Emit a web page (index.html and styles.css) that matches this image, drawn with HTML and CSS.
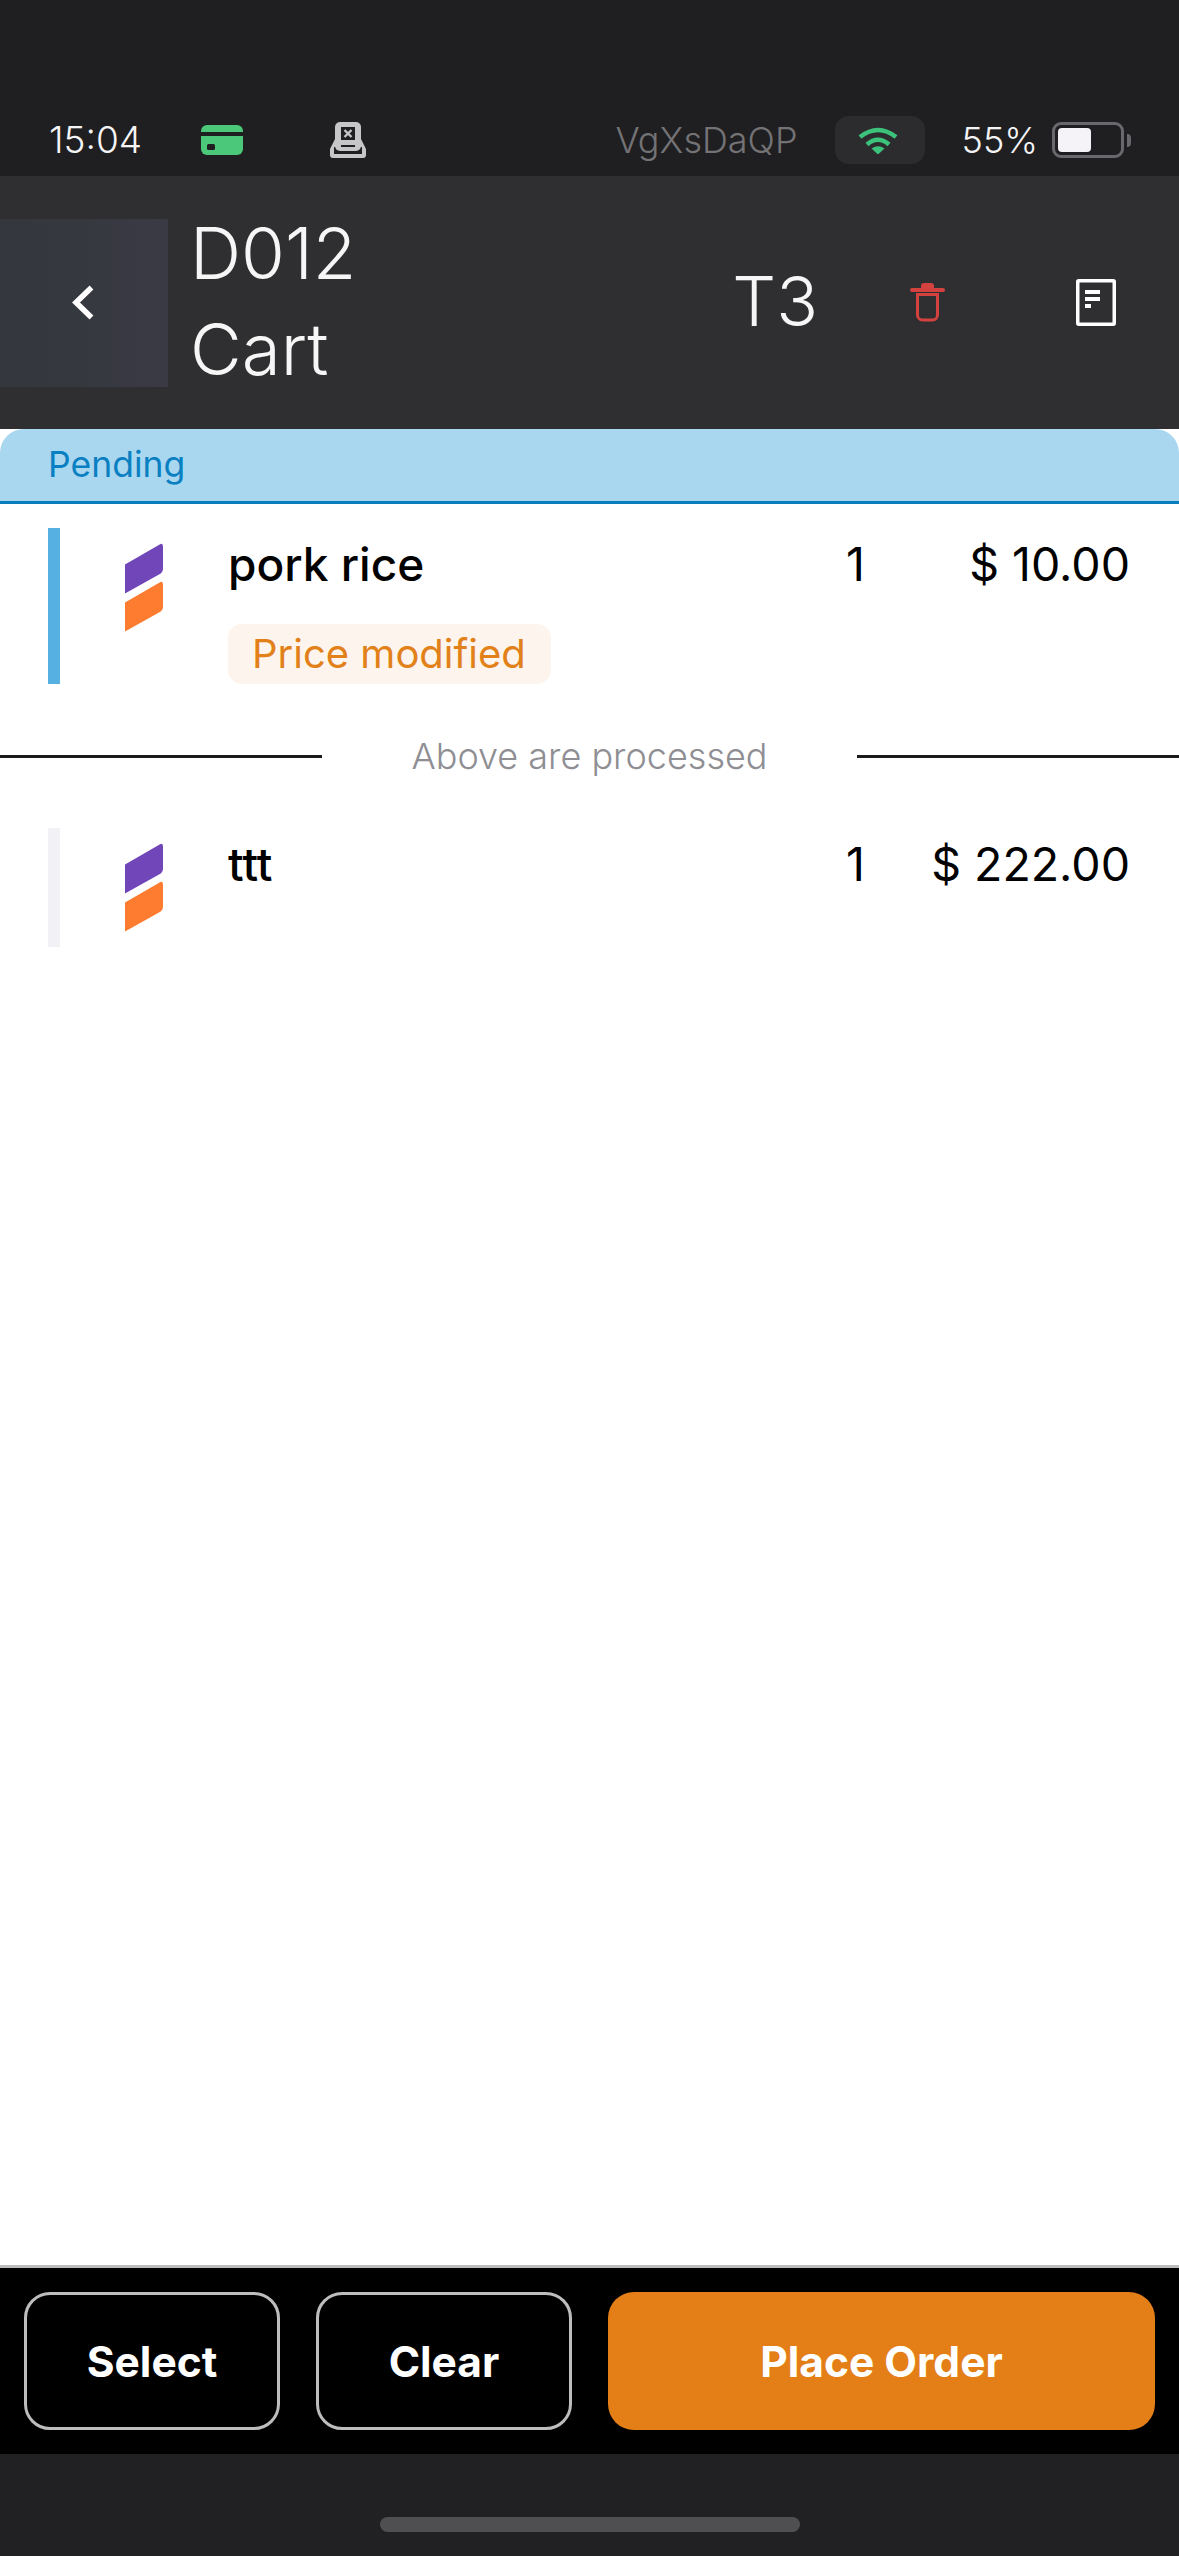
FILE: index.html
```html
<!DOCTYPE html>
<html lang="en">
<head>
<meta charset="utf-8">
<title>D012 Cart</title>
<link rel="stylesheet" href="styles.css">
</head>
<body>
<div class="app">
  <div class="status">
    <span class="time">15:04</span>
    <svg class="ic-card" viewBox="0 0 42 30"><rect width="42" height="30" rx="6" fill="#4cc87b"/><rect y="7" width="42" height="4" fill="#1f1e21"/><rect x="6" y="19" width="8" height="6" rx="1.5" fill="#1f1e21"/></svg>
    <svg class="ic-printer" viewBox="0 0 36 36"><path d="M5 17 0 27v6a3 3 0 0 0 3 3h30a3 3 0 0 0 3-3v-6l-5-10z" fill="#c6c5c8"/><rect x="4" y="25" width="28" height="7" fill="#1f1e21"/><rect x="5" y="0" width="26" height="29" rx="5" fill="#c6c5c8"/><rect x="11" y="5" width="14" height="13" fill="#1f1e21"/><path d="M14.500 8 21.500 15M21.500 8 14.500 15" stroke="#c6c5c8" stroke-width="2.400"/><rect x="11" y="23" width="14" height="2" fill="#1f1e21"/></svg>
    <div class="status-right">
      <span class="carrier">VgXsDaQP</span>
      <div class="wifi-pill">
        <svg class="ic-wifi" viewBox="0 0 40 28"><path d="M2 11Q20-3 38 11M9 18.500Q20 9 31 18.500" fill="none" stroke="#3cc27b" stroke-width="4.500"/><path d="M13.500 22.500Q20 18 26.500 22.500L20 28.500z" fill="#3cc27b"/></svg>
      </div>
      <span class="percent">55%</span>
      <div class="battery"><div class="battery-fill"></div></div>
      <div class="battery-nub"></div>
    </div>
  </div>

  <header class="header">
    <button class="back" type="button">
      <svg class="ic-back" viewBox="0 0 22 35"><path d="M19.500 2.500 4 17.500l15.500 15" fill="none" stroke="#fff" stroke-width="5.500"/></svg>
    </button>
    <div class="titles">
      <div>D012</div>
      <div>Cart</div>
    </div>
    <div class="table">T3</div>
    <svg class="ic-trash" viewBox="0 0 35 39"><path d="M11 5.500V3a3 3 0 0 1 3-3h7a3 3 0 0 1 3 3v2.500z" fill="#d4423f"/><rect x="0" y="5" width="35" height="4" rx="2" fill="#d4423f"/><path d="M7.500 11.500V32a5 5 0 0 0 5 5h10a5 5 0 0 0 5-5V11.500z" fill="none" stroke="#d4423f" stroke-width="3"/></svg>
    <svg class="ic-doc" viewBox="0 0 40 47"><rect x="1.750" y="1.750" width="36.500" height="43.500" rx="1" fill="none" stroke="#fff" stroke-width="3.500"/><path d="M9 11h15v4H9zM9 18h15v4H9zM9 25h6v4H9z" fill="#fff"/></svg>
  </header>

  <main class="content">
    <div class="pending">Pending</div>

    <div class="row row-first">
      <div class="bar bar-blue"></div>
      <svg class="logo" viewBox="0 0 38 88"><path d="M0 21 35.500.500Q38-.500 38 3V25Q38 29 34 31L0 50z" fill="#7046b8"/><path d="M0 59 35.500 38.500Q38 37.500 38 41V63Q38 67 34 69L0 88z" fill="#fd7c2f"/></svg>
      <div class="main">
        <div class="name">pork rice</div>
        <div class="tag">Price modified</div>
      </div>
      <div class="qty">1</div>
      <div class="price">$ 10.00</div>
    </div>

    <div class="divider">
      <span class="rule"></span>
      <span class="divider-text">Above are processed</span>
      <span class="rule"></span>
    </div>

    <div class="row">
      <div class="bar bar-grey"></div>
      <svg class="logo" viewBox="0 0 38 88"><path d="M0 21 35.500.500Q38-.500 38 3V25Q38 29 34 31L0 50z" fill="#7046b8"/><path d="M0 59 35.500 38.500Q38 37.500 38 41V63Q38 67 34 69L0 88z" fill="#fd7c2f"/></svg>
      <div class="main">
        <div class="name">ttt</div>
      </div>
      <div class="qty">1</div>
      <div class="price">$ 222.00</div>
    </div>
  </main>

  <div class="actions">
    <button class="btn btn-outline" type="button">Select</button>
    <button class="btn btn-outline" type="button">Clear</button>
    <button class="btn btn-primary" type="button">Place Order</button>
  </div>

  <div class="home-area"><div class="home-indicator"></div></div>
</div>
</body>
</html>
```
FILE: styles.css
```css
* { box-sizing: border-box; }
html, body { margin: 0; padding: 0; }
body {
  width: 1179px;
  height: 2556px;
  overflow: hidden;
  font-family: Inter, "Liberation Sans", sans-serif;
  background: #fff;
}
.app { display: flex; flex-direction: column; height: 2556px; }

/* status bar */
.status {
  height: 176px;
  flex: none;
  background: #1f1e21;
  display: flex;
  align-items: center;
  padding: 104px 48px 0 49px;
  color: #f4f4f5;
}
.time { font-size: 37px; font-weight: 300; width: 92px; line-height: 72px; white-space: nowrap; }
.ic-card { width: 42px; height: 30px; margin-left: 60px; display: block; }
.ic-printer { width: 36px; height: 36px; margin-left: 87px; display: block; }
.status-right { margin-left: auto; display: flex; align-items: center; }
.carrier { font-size: 36px; font-weight: 300; color: #737275; white-space: nowrap; }
.wifi-pill {
  width: 90px;
  height: 48px;
  margin-left: 37px;
  border-radius: 14px;
  background: #2c2c2e;
  display: flex;
  align-items: center;
  padding-left: 23px;
}
.ic-wifi { width: 40px; height: 28px; display: block; }
.percent { font-size: 36px; font-weight: 300; margin-left: 37px; white-space: nowrap; }
.battery {
  width: 72px;
  height: 36px;
  margin-left: 14px;
  border: 3px solid #69686c;
  border-radius: 9px;
  padding: 3px;
}
.battery-fill { width: 33px; height: 24px; border-radius: 4px; background: #f5f3f7; }
.battery-nub { width: 4px; height: 13px; margin-left: 3px; background: #69686c; border-radius: 0 7px 7px 0; }

/* header */
.header {
  height: 253px;
  flex: none;
  background: #2f2e30;
  display: flex;
  align-items: center;
  padding-right: 63px;
  color: #f6f6f6;
}
.back {
  width: 168px;
  height: 168px;
  flex: none;
  border: 0;
  padding: 0;
  background: linear-gradient(90deg, #33373d, #3a3a44);
  display: flex;
  align-items: center;
  justify-content: center;
}
.ic-back { width: 22px; height: 35px; display: block; margin-left: -3px; }
.titles { margin-left: 22px; font-size: 71px; font-weight: 300; line-height: 96px; margin-top: -4px; }
.table { margin-left: auto; margin-top: -3px; font-size: 69px; font-weight: 300; line-height: 96px; }
.ic-trash { width: 35px; height: 39px; margin-left: 92px; display: block; }
.ic-doc { width: 40px; height: 47px; margin-left: 131px; display: block; }

/* list */
.content { flex: 1; background: #fff; }
.pending {
  height: 75px;
  border-radius: 24px 24px 0 0;
  border-bottom: 3px solid #0a7dbb;
  background: #a9d7f0;
  color: #0a80c2;
  font-size: 35.500px;
  line-height: 72px;
  padding-left: 48px;
}
.row {
  display: flex;
  align-items: flex-start;
  padding-right: 49px;
  color: #000;
}
.row-first { margin-top: 24px; }
.bar { width: 12px; margin-left: 48px; flex: none; align-self: stretch; }
.bar-blue { background: #56b0e2; }
.bar-grey { background: #f2f1f5; }
.logo { width: 38px; height: 89px; margin: 15px 0 15px 65px; flex: none; display: block; }
.main { margin-left: 65px; flex: 1; padding-top: 6px; }
.name { font-size: 46px; font-weight: 500; line-height: 60px; }
.tag {
  display: inline-block;
  margin-top: 30px;
  height: 60px;
  padding: 0 25px 0 24px;
  border-radius: 14px;
  background: #fdf5ed;
  color: #e2811a;
  font-size: 40px;
  line-height: 60px;
  vertical-align: top;
}
.qty { width: 44px; font-size: 46.500px; line-height: 60px; margin-top: 6px; }
.price { width: 240px; text-align: right; font-size: 46.500px; line-height: 60px; margin-top: 6px; white-space: nowrap; }

.divider {
  height: 144px;
  display: flex;
  align-items: center;
}
.rule { height: 3px; width: 322px; flex: none; background: #1a191c; }
.divider-text {
  width: 535px;
  flex: none;
  text-align: center;
  color: #8e8e93;
  font-size: 36px;
  font-weight: 300;
  white-space: nowrap;
}

/* actions */
.actions {
  height: 189px;
  flex: none;
  background: #000;
  border-top: 3px solid #bcbcbc;
  display: flex;
  align-items: center;
  padding: 0 24px;
  gap: 36px;
}
.btn {
  height: 138px;
  border-radius: 26px;
  font-family: Inter, "Liberation Sans", sans-serif;
  font-size: 42.500px;
  font-weight: 700;
  color: #fff;
  padding: 0;
}
.btn-outline { width: 256px; background: #000; border: 3px solid #bdbdbd; }
.btn-primary { width: 547px; background: #e37f16; border: 0; }

/* home */
.home-area {
  height: 102px;
  flex: none;
  background: #212023;
  display: flex;
  justify-content: center;
  padding-top: 63px;
}
.home-indicator { width: 420px; height: 15px; border-radius: 8px; background: #4f4e51; }
```
